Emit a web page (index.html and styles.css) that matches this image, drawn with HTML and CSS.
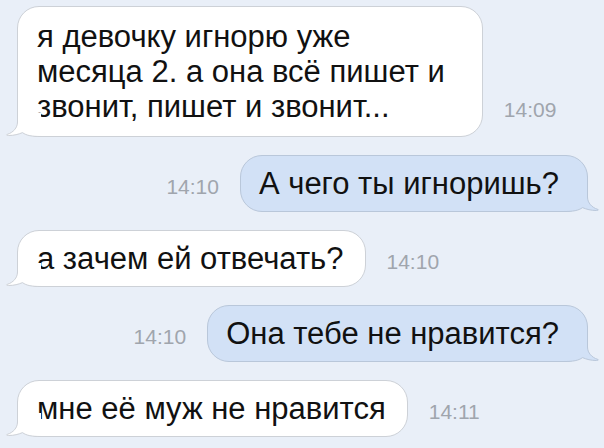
FILE: index.html
```html
<!DOCTYPE html>
<html lang="ru">
<head>
<meta charset="utf-8">
<link rel="stylesheet" href="styles.css">
</head>
<body>
<div class="chat">
  <div class="row in">
    <div class="bubble white wide">я девочку игнорю уже<br>месяца 2. а она всё пишет и<br>звонит, пишет и звонит...
      <svg class="tail" width="36" height="24" viewBox="0 0 36 24"><path class="tf" d="M12.5 0 L12.5 9 C12.5 15 8 19.5 2.5 21.3 C1 21.8 1.7 22.5 3.5 22.5 C9 22.5 13.5 21.3 17.5 19.6 C21.5 22.6 27 23.5 36 23.5 L36 0 Z"/><path class="ts" d="M12.5 0 L12.5 9 C12.5 15 8 19.5 2.5 21.3 C1 21.8 1.7 22.5 3.5 22.5 C9 22.5 13.5 21.3 17.5 19.6 C21.5 22.6 27 23.5 36 23.5"/></svg>
    </div>
    <span class="time">14:09</span>
  </div>
  <div class="row out">
    <span class="time">14:10</span>
    <div class="bubble blue">А чего ты игноришь?
      <svg class="tail" width="36" height="24" viewBox="0 0 36 24"><path class="tf" d="M12.5 0 L12.5 9 C12.5 15 8 19.5 2.5 21.3 C1 21.8 1.7 22.5 3.5 22.5 C9 22.5 13.5 21.3 17.5 19.6 C21.5 22.6 27 23.5 36 23.5 L36 0 Z"/><path class="ts" d="M12.5 0 L12.5 9 C12.5 15 8 19.5 2.5 21.3 C1 21.8 1.7 22.5 3.5 22.5 C9 22.5 13.5 21.3 17.5 19.6 C21.5 22.6 27 23.5 36 23.5"/></svg>
    </div>
  </div>
  <div class="row in">
    <div class="bubble white">а зачем ей отвечать?
      <svg class="tail" width="36" height="24" viewBox="0 0 36 24"><path class="tf" d="M12.5 0 L12.5 9 C12.5 15 8 19.5 2.5 21.3 C1 21.8 1.7 22.5 3.5 22.5 C9 22.5 13.5 21.3 17.5 19.6 C21.5 22.6 27 23.5 36 23.5 L36 0 Z"/><path class="ts" d="M12.5 0 L12.5 9 C12.5 15 8 19.5 2.5 21.3 C1 21.8 1.7 22.5 3.5 22.5 C9 22.5 13.5 21.3 17.5 19.6 C21.5 22.6 27 23.5 36 23.5"/></svg>
    </div>
    <span class="time">14:10</span>
  </div>
  <div class="row out">
    <span class="time">14:10</span>
    <div class="bubble blue">Она тебе не нравится?
      <svg class="tail" width="36" height="24" viewBox="0 0 36 24"><path class="tf" d="M12.5 0 L12.5 9 C12.5 15 8 19.5 2.5 21.3 C1 21.8 1.7 22.5 3.5 22.5 C9 22.5 13.5 21.3 17.5 19.6 C21.5 22.6 27 23.5 36 23.5 L36 0 Z"/><path class="ts" d="M12.5 0 L12.5 9 C12.5 15 8 19.5 2.5 21.3 C1 21.8 1.7 22.5 3.5 22.5 C9 22.5 13.5 21.3 17.5 19.6 C21.5 22.6 27 23.5 36 23.5"/></svg>
    </div>
  </div>
  <div class="row in">
    <div class="bubble white">мне её муж не нравится
      <svg class="tail" width="36" height="24" viewBox="0 0 36 24"><path class="tf" d="M12.5 0 L12.5 9 C12.5 15 8 19.5 2.5 21.3 C1 21.8 1.7 22.5 3.5 22.5 C9 22.5 13.5 21.3 17.5 19.6 C21.5 22.6 27 23.5 36 23.5 L36 0 Z"/><path class="ts" d="M12.5 0 L12.5 9 C12.5 15 8 19.5 2.5 21.3 C1 21.8 1.7 22.5 3.5 22.5 C9 22.5 13.5 21.3 17.5 19.6 C21.5 22.6 27 23.5 36 23.5"/></svg>
    </div>
    <span class="time">14:11</span>
  </div>
</div>
</body>
</html>
```
FILE: styles.css
```css
html, body {
  margin: 0;
  padding: 0;
  background: #e9eff8;
}
body {
  width: 604px;
  height: 448px;
  overflow: hidden;
  font-family: "Liberation Sans", Arial, sans-serif;
  color: #111;
}
.chat {
  display: flex;
  flex-direction: column;
  gap: 18px;
  padding: 6px 16px 0 17px;
}
.row {
  display: flex;
  align-items: last baseline;
  gap: 21px;
}
.row.out {
  justify-content: flex-end;
}
.bubble {
  position: relative;
  font-size: 31px;
  line-height: 35px;
  padding: 10px 21px 10px 19px;
  border-radius: 22px;
  border: 1px solid #cdd1d7;
  white-space: nowrap;
}
.bubble.wide {
  padding-top: 12px;
  padding-bottom: 12px;
  padding-right: 37px;
}
.bubble.white {
  background: #fff;
}
.bubble.blue {
  background: #d2e1f6;
  border-color: #b9c7da;
  padding-left: 18px;
  padding-right: 28px;
}
.time {
  font-size: 21px;
  color: #a0a5ad;
}
.tail {
  position: absolute;
  bottom: -1px;
  left: -13px;
  overflow: visible;
}
.blue .tail {
  left: auto;
  right: -13px;
  transform: scaleX(-1);
}
.tail .tf {
  stroke: none;
}
.white .tail .tf { fill: #fff; }
.blue .tail .tf { fill: #d2e1f6; }
.tail .ts {
  fill: none;
  stroke-width: 1;
}
.white .tail .ts { stroke: #cdd1d7; }
.blue .tail .ts { stroke: #b9c7da; }
```
